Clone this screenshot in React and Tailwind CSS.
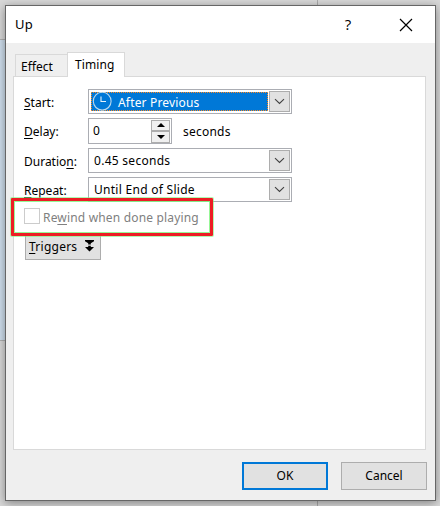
import React from "react";

const Chevron = () => (
  <span className="flex h-[21px] w-[21px] shrink-0 items-center justify-center border border-[#adadad] bg-[#e1e1e1]">
    <svg width="11" height="7" viewBox="0 0 11 7" fill="none" stroke="#404040" strokeWidth="1.1">
      <path d="M1 1.2 5.5 5.5 10 1.2" />
    </svg>
  </span>
);

const Label = ({ children }) => (
  <span className="w-[64px] shrink-0 pt-[2px] leading-[16px]">{children}</span>
);

const Combo = ({ children }) => (
  <div className="flex h-[25px] w-[204px] items-center justify-between border border-[#abadb3] bg-white pr-px pl-[5px]">
    <span className="leading-[16px] tracking-[0.28px]">{children}</span>
    <Chevron />
  </div>
);

const U = ({ children }) => (
  <span className="underline decoration-1 underline-offset-2">{children}</span>
);

export default function App() {
  return (
    <div className="relative h-[506px] w-[440px] overflow-hidden bg-[#d8d8d8] font-['Noto_Sans','Open_Sans',sans-serif] text-[12px] text-black">
      {/* Slide workspace visible around the dialog */}
      <div className="absolute top-[39px] left-0 h-[302px] w-[20px] border-y border-[#b0b0b0] bg-[#cfdeed]" />
      <div className="absolute top-0 left-[317px] h-[506px] w-px bg-[#aaaaaa]" />

      <div className="absolute top-[5px] left-[5px] flex h-[496px] w-[431px] flex-col border border-[#666666] bg-[#efefef] shadow-[0_2px_9px_rgba(0,0,0,0.4)]">
        <header className="flex h-[37px] shrink-0 items-center bg-white pl-[9px]">
          <span className="text-[13px] tracking-[0.3px]">Up</span>
          <span className="ml-[309px] w-[12px] text-center font-['Open_Sans','Noto_Sans',sans-serif] text-[15px]">?</span>
          <svg className="ml-[45px]" width="14" height="14" viewBox="0 0 14 14" stroke="#000" strokeWidth="1.2">
            <path d="M1 1 13 13M13 1 1 13" />
          </svg>
        </header>

        <div className="flex h-[33px] shrink-0 items-end pl-[9px]">
          <div className="h-[22px] w-[52px] border border-r-0 border-b-0 border-[#d9d9d9] pl-[5px] leading-[24px]">
            Effect
          </div>
          <div className="relative z-10 -mb-px h-[25px] w-[58px] border border-b-0 border-[#d9d9d9] bg-white pl-[7px] leading-[24px] tracking-[0.1px]">
            Timing
          </div>
        </div>

        <section className="ml-[7px] flex h-[374px] w-[413px] shrink-0 flex-col border border-[#d9d9d9] bg-white pt-[12px] pl-[10px]">
          <div className="flex h-[25px] items-center">
            <Label><U>S</U>tart:</Label>
            <div className="flex h-[25px] w-[204px] items-center justify-between border border-[#abadb3] px-px pl-[2px]">
              <div className="flex h-[19px] w-[177px] items-center border border-dotted border-[#ff8a20] bg-[#0078d7] text-white">
                <svg width="21" height="19" viewBox="0 0 21 19" fill="none" stroke="#b9d9ee" strokeWidth="1.1">
                  <circle cx="10.2" cy="9.2" r="8.9" />
                  <path d="M9 4.5V9.5H14" stroke="#e4f2fb" />
                </svg>
                <span className="ml-[5px] pt-[2px] tracking-[0.17px]">After Previous</span>
              </div>
              <Chevron />
            </div>
          </div>

          <div className="mt-[4px] flex h-[26px] items-center">
            <Label><U>D</U>elay:</Label>
            <div className="flex h-[26px] w-[84px] items-center justify-between border border-[#abadb3] pr-px pl-[4px]">
              <span className="leading-[16px]">0</span>
              <div className="flex h-[23px] w-[19px] flex-col">
                <span className="flex flex-1 items-center justify-center border border-[#adadad] bg-[#f0f0f0]">
                  <svg width="8" height="4" viewBox="0 0 8 4"><path d="M4 0 8 4H0Z" /></svg>
                </span>
                <span className="flex flex-1 items-center justify-center border border-[#adadad] bg-[#f0f0f0]">
                  <svg width="8" height="4" viewBox="0 0 8 4"><path d="M0 0H8L4 4Z" /></svg>
                </span>
              </div>
            </div>
            <span className="ml-[11px] pt-[2px] tracking-[0.22px]">seconds</span>
          </div>

          <div className="mt-[4px] flex h-[25px] items-center">
            <Label>Duratio<U>n</U>:</Label>
            <Combo>0.45 seconds</Combo>
          </div>

          <div className="mt-[4px] flex h-[25px] items-center">
            <Label><U>R</U>epeat:</Label>
            <Combo>Until End of Slide</Combo>
          </div>

          <div className="relative mt-[6px] flex h-[16px] items-center text-[#808080]">
            <span className="h-[16px] w-[16px] border border-[#cccccc] bg-white" />
            <span className="ml-[3px] pt-[3px] leading-[16px] tracking-[0.17px]">Re<U>w</U>ind when done playing</span>
            {/* Highlight callout around the option */}
            <div className="absolute top-[-10px] left-[-13px] z-10 h-[38px] w-[202px] rounded-[1px] border-[3px] border-[#ed1c24] shadow-[0_0_0_1px_#7cf57c99,inset_0_0_0_1px_#7cf57ccc]" />
          </div>

          <button className="mt-[9px] ml-px flex h-[27px] w-[76px] shrink-0 items-center justify-between border border-[#adadad] bg-[#e1e1e1] pr-[6px] pl-[3px]">
            <span className="tracking-[0.25px]"><U>T</U>riggers</span>
            <svg className="mb-[2px]" width="9" height="12" viewBox="0 0 9 12">
              <path d="M0 0H9V1.2L5.8 3.2V4.6H3.2V3.2L0 1.2ZM3.2 5.8H5.8V7H9L4.5 11.5 0 7H3.2Z" />
            </svg>
          </button>
        </section>

        <footer className="mt-[12px] mr-[8px] flex justify-end gap-[13px]">
          <button className="h-[28px] w-[86px] border-2 border-[#0078d7] bg-[#e1e1e1]">OK</button>
          <button className="h-[28px] w-[86px] border border-[#adadad] bg-[#e1e1e1]">Cancel</button>
        </footer>
      </div>
    </div>
  );
}
